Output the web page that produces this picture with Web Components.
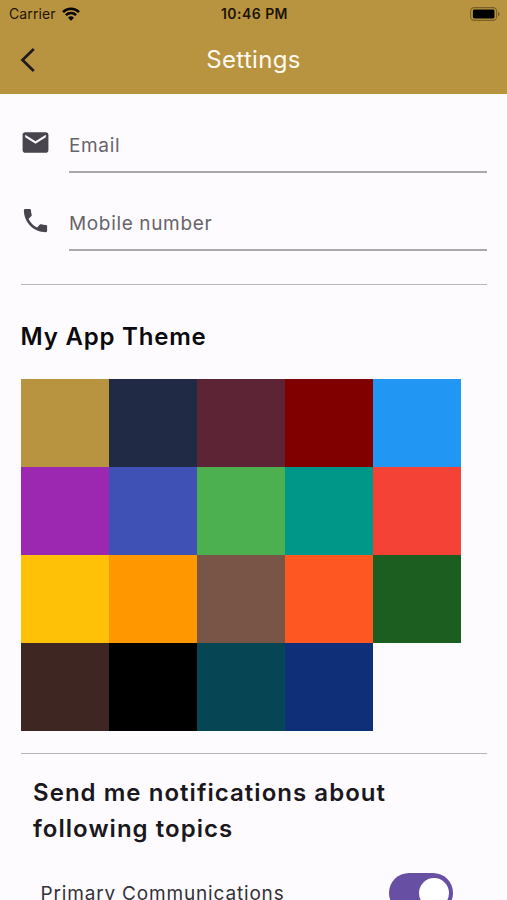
<!DOCTYPE html>
<html lang="en">
<head>
<meta charset="utf-8">
<meta name="viewport" content="width=device-width, initial-scale=1">
<title>Settings</title>
<style>
    body {
        margin: 0;
        height: 100vh;
        overflow: hidden;
        background: #fefbff;
        font-family: Inter, "Liberation Sans", sans-serif;
    }
</style>
</head>
<body>
<settings-page></settings-page>

<script>
class StatusBar extends HTMLElement {
    constructor() {
        super();
        this.attachShadow({ mode: 'open' });
    }

    connectedCallback() {
        this.shadowRoot.innerHTML = `
            <style>
                :host {
                    display: grid;
                    grid-template-columns: 1fr auto 1fr;
                    align-items: center;
                    height: 27px;
                    padding: 0 7px 0 9px;
                    color: #1c1405;
                    font-size: 14px;
                    line-height: 27px;
                }

                .carrier {
                    display: flex;
                    align-items: center;
                    gap: 6px;
                    letter-spacing: 0.1px;
                }

                .time {
                    font-weight: 600;
                    letter-spacing: 0.45px;
                }

                .battery {
                    justify-self: end;
                }

                svg {
                    display: block;
                }
            </style>
            <div class="carrier">
                <span>Carrier</span>
                <svg width="18" height="14" viewBox="0 0 18 14" fill="none" stroke="#000" stroke-width="2.5">
                    <path d="M1 5.1a11.5 11.5 0 0 1 16 0"/>
                    <path d="M3.9 8.2a7.3 7.3 0 0 1 10.2 0"/>
                    <path d="M9 13.7 6.1 10.8a4.1 4.1 0 0 1 5.8 0z" fill="#000" stroke="none"/>
                </svg>
            </div>
            <span class="time">10:46 PM</span>
            <svg class="battery" width="30" height="14" viewBox="0 0 30 14">
                <rect x="0.6" y="0.6" width="26" height="12.8" rx="3.6" fill="none" stroke="#7a5f28" stroke-width="1.1"/>
                <rect x="2.9" y="2.6" width="21.6" height="8.8" rx="1.4"/>
                <path d="M28 4.7v4.6c1-.4 1.7-1.3 1.7-2.3S29 5.1 28 4.7z" fill="#7a5f28"/>
            </svg>
        `;
    }
}
customElements.define('status-bar', StatusBar);


class AppBar extends HTMLElement {
    constructor() {
        super();
        this.attachShadow({ mode: 'open' });
    }

    connectedCallback() {
        this.shadowRoot.innerHTML = `
            <style>
                :host {
                    display: block;
                    height: 93.5px;
                    background: #b99440;
                }

                .barra {
                    display: grid;
                    grid-template-columns: 1fr auto 1fr;
                    align-items: center;
                    height: 66px;
                    padding: 0 20px;
                }

                h1 {
                    margin: 0;
                    color: #fffaf0;
                    font-size: 24px;
                    font-weight: 400;
                    line-height: 30px;
                    letter-spacing: 0.3px;
                }

                svg {
                    display: block;
                }
            </style>
            <status-bar></status-bar>
            <div class="barra">
                <svg width="16" height="26" viewBox="0 0 16 26" fill="none" stroke="#1d1b20" stroke-width="2.7">
                    <path d="M13.8 2 2.5 13l11.3 11"/>
                </svg>
                <h1><slot></slot></h1>
            </div>
        `;
    }
}
customElements.define('app-bar', AppBar);


class TextField extends HTMLElement {
    constructor() {
        super();
        this.attachShadow({ mode: 'open' });
    }

    connectedCallback() {
        this.shadowRoot.innerHTML = `
            <style>
                :host {
                    display: grid;
                    grid-template-columns: 48.5px 1fr;
                    height: 78px;
                }

                .icono {
                    padding-top: 33px;
                    margin-left: -1px;
                }

                .campo {
                    box-sizing: border-box;
                    height: 79px;
                    padding-top: 38px;
                    border-bottom: 2px solid #aaa7ac;
                    color: #67646a;
                    font-size: 19px;
                    line-height: 28px;
                    letter-spacing: 0.65px;
                }
            </style>
            <div class="icono"><slot name="icon"></slot></div>
            <div class="campo"><slot></slot></div>
        `;
    }
}
customElements.define('text-field', TextField);


class ColorPalette extends HTMLElement {
    constructor() {
        super();
        this.attachShadow({ mode: 'open' });
    }

    connectedCallback() {
        const colors = this.getAttribute('colors').split(' ');
        this.shadowRoot.innerHTML = `
            <style>
                :host {
                    display: grid;
                    grid-template-columns: repeat(5, 88px);
                    grid-auto-rows: 88px;
                }
            </style>
            ${colors.map(c => `<div style="background: ${c}"></div>`).join('')}
        `;
    }
}
customElements.define('color-palette', ColorPalette);


class ToggleRow extends HTMLElement {
    constructor() {
        super();
        this.attachShadow({ mode: 'open' });
    }

    connectedCallback() {
        this.shadowRoot.innerHTML = `
            <style>
                :host {
                    display: flex;
                    justify-content: space-between;
                    align-items: center;
                    height: 40px;
                    padding: 0 34px 0 20px;
                    color: #343138;
                    font-size: 19px;
                    letter-spacing: 0.83px;
                }

                .switch {
                    display: flex;
                    justify-content: flex-end;
                    align-items: center;
                    box-sizing: border-box;
                    width: 64px;
                    height: 40px;
                    padding: 0 4px;
                    border-radius: 20px;
                    background: #6750a4;
                }

                .thumb {
                    width: 30px;
                    height: 30px;
                    border-radius: 50%;
                    background: #fff;
                }
            </style>
            <span><slot></slot></span>
            <div class="switch"><div class="thumb"></div></div>
        `;
    }
}
customElements.define('toggle-row', ToggleRow);


class SettingsPage extends HTMLElement {
    constructor() {
        super();
        this.attachShadow({ mode: 'open' });
    }

    connectedCallback() {
        this.shadowRoot.innerHTML = `
            <style>
                :host {
                    display: block;
                }

                main {
                    padding: 0 20px 0 20.5px;
                }

                svg {
                    display: block;
                }

                hr {
                    height: 1.3px;
                    margin: 0;
                    border: 0;
                    background: #b9b6bb;
                }

                .first {
                    margin-top: 34px;
                }

                h2 {
                    margin: 0;
                    font-size: 24px;
                    font-weight: 600;
                    line-height: 36px;
                }

                .theme {
                    padding: 34px 0 24px;
                    color: #0b0a0c;
                    letter-spacing: 0.8px;
                }

                .second {
                    margin-top: 22px;
                }

                .topics {
                    padding: 21px 60px 26px 12.5px;
                    color: #1a181c;
                    letter-spacing: 1.04px;
                }
            </style>
            <app-bar>Settings</app-bar>
            <main>
                <text-field>
                    <svg slot="icon" width="31" height="31" viewBox="0 0 24 24" fill="#49454f">
                        <path d="M20 4H4c-1.1 0-2 .9-2 2v12c0 1.1.9 2 2 2h16c1.1 0 2-.9 2-2V6c0-1.1-.9-2-2-2zm0 4-8 5-8-5V6l8 5 8-5v2z"/>
                    </svg>
                    Email
                </text-field>
                <text-field>
                    <svg slot="icon" width="31" height="31" viewBox="0 0 24 24" fill="#49454f">
                        <path d="M6.62 10.79c1.44 2.83 3.76 5.14 6.59 6.59l2.2-2.2c.27-.27.67-.36 1.02-.24 1.12.37 2.33.57 3.57.57.55 0 1 .45 1 1V20c0 .55-.45 1-1 1-9.39 0-17-7.61-17-17 0-.55.45-1 1-1h3.5c.55 0 1 .45 1 1 0 1.25.2 2.45.57 3.57.11.35.03.74-.25 1.02l-2.2 2.2z"/>
                    </svg>
                    Mobile number
                </text-field>
                <hr class="first">
                <h2 class="theme">My App Theme</h2>
                <color-palette colors="#b99440 #212a45 #5c2434 #800000 #2196f3 #9c27b0 #3f51b5 #4caf50 #009688 #f44336 #ffc107 #ff9800 #795548 #ff5722 #1b5e20 #3e2723 #000000 #064654 #0f2f78"></color-palette>
                <hr class="second">
                <h2 class="topics">Send me notifications about following topics</h2>
                <toggle-row>Primary Communications</toggle-row>
            </main>
        `;
    }
}
customElements.define('settings-page', SettingsPage);
</script>
</body>
</html>
